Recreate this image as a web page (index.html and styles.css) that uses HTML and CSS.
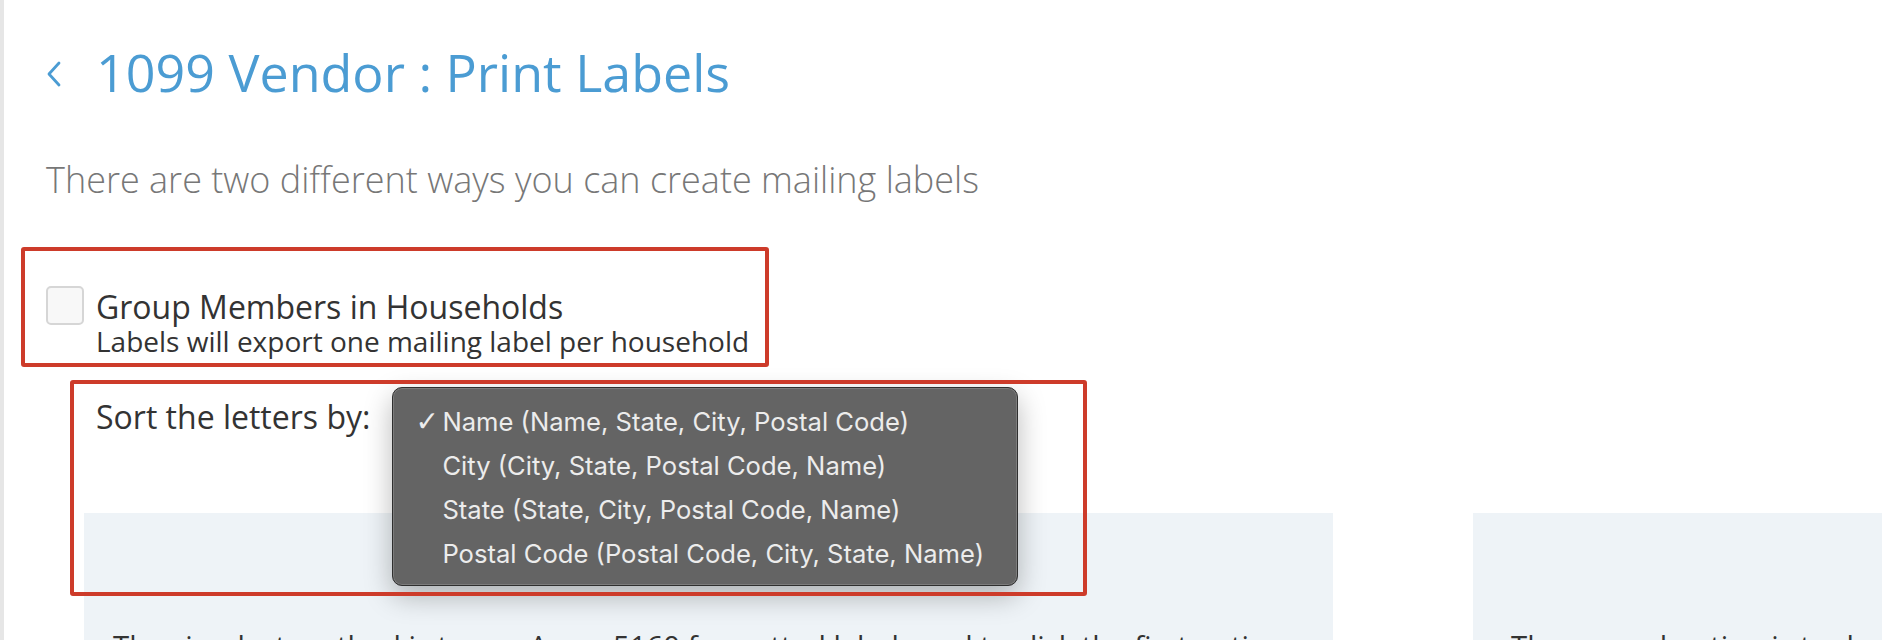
FILE: index.html
```html
<!DOCTYPE html>
<html lang="en">
<head>
<meta charset="utf-8">
<title>1099 Vendor : Print Labels</title>
<link rel="stylesheet" href="styles.css">
</head>
<body>
<div class="page">
  <header class="page-header">
    <a class="back" href="#" aria-label="Back">
      <svg width="16" height="26" viewBox="0 0 16 26"><polyline points="13,2 3,13 13,24" fill="none" stroke="#4b9cd3" stroke-width="2.8" stroke-linecap="round" stroke-linejoin="round"/></svg>
    </a>
    <h1 class="title">1099 Vendor : Print Labels</h1>
  </header>

  <p class="intro">There are two different ways you can create mailing labels</p>

  <div class="household-box">
    <label class="check-row">
      <span class="checkbox"></span>
      <span class="check-text">
        <span class="check-title">Group Members in Households</span>
        <span class="check-sub">Labels will export one mailing label per household</span>
      </span>
    </label>
  </div>

  <section class="sort-section">
    <div class="sort-row">
      <span class="sort-label">Sort the letters by:</span>
      <div class="select-anchor">
        <ul class="menu">
          <li class="menu-item"><span class="tick">✓</span><span>Name (Name, State, City, Postal Code)</span></li>
          <li class="menu-item"><span class="tick"></span><span>City (City, State, Postal Code, Name)</span></li>
          <li class="menu-item"><span class="tick"></span><span>State (State, City, Postal Code, Name)</span></li>
          <li class="menu-item"><span class="tick"></span><span>Postal Code (Postal Code, City, State, Name)</span></li>
        </ul>
      </div>
    </div>

    <div class="panels">
      <div class="panel panel-first">
        <p class="panel-text">The simplest method is to use Avery 5160 formatted labels and to click the first option below to print your labels directly.</p>
      </div>
      <div class="panel panel-second">
        <p class="panel-text">The second option is to download a file of addresses and merge it into your own label template.</p>
      </div>
    </div>

    <div class="annotation"></div>
  </section>
</div>
</body>
</html>
```

FILE: styles.css
```css
html, body {
  margin: 0;
  padding: 0;
  overflow: hidden;
  height: 640px;
  background: #ffffff;
}

body {
  font-family: "Open Sans", "Liberation Sans", sans-serif;
  color: #333333;
  border-left: 4px solid #e6e6e6;
  box-sizing: border-box;
}

.page {
  padding: 46px 0 0 42px;
}

.page-header {
  display: flex;
  align-items: center;
  gap: 34px;
  height: 52px;
}

.back {
  display: flex;
  width: 16px;
  height: 26px;
  margin-top: 4px;
}

.title {
  margin: 0;
  font-size: 52px;
  line-height: 52px;
  font-weight: 400;
  color: #4b9cd3;
  white-space: nowrap;
}

.intro {
  margin: 64px 0 0 0;
  font-size: 36px;
  line-height: 36px;
  font-weight: 300;
  color: #777777;
  white-space: nowrap;
}

.household-box {
  margin: 49px 0 0 -25px;
  width: 748px;
  height: 120px;
  box-sizing: border-box;
  border: 4px solid #cd3b2a;
  border-radius: 3px;
  padding: 38px 0 0 21px;
}

.check-row {
  display: flex;
  align-items: flex-start;
  gap: 12px;
}

.checkbox {
  flex: none;
  width: 38px;
  height: 39px;
  box-sizing: border-box;
  margin-top: -3px;
  background: #f8f8f8;
  border: 2px solid #d6d6d6;
  border-radius: 5px;
}

.check-text {
  display: flex;
  flex-direction: column;
  white-space: nowrap;
}

.check-title {
  font-size: 32px;
  line-height: 36px;
  color: #333333;
}

.check-sub {
  font-size: 28px;
  line-height: 33px;
  color: #333333;
}

.sort-section {
  position: relative;
  padding-top: 34px;
}

.sort-row {
  display: flex;
  align-items: flex-start;
  gap: 22px;
  margin-left: 50px;
}

.sort-label {
  font-size: 32px;
  line-height: 32px;
  white-space: nowrap;
}

.select-anchor {
  position: relative;
  width: 626px;
  height: 32px;
}

.menu {
  position: absolute;
  z-index: 3;
  top: -14px;
  left: 0;
  width: 626px;
  box-sizing: border-box;
  margin: 0;
  padding: 12px 0 9px 0;
  list-style: none;
  background: #646464;
  border: 1px solid #2f2f2f;
  border-radius: 10px;
  box-shadow: inset 0 0 0 1px rgba(255, 255, 255, 0.16), 0 10px 28px rgba(0, 0, 0, 0.28);
  font-family: "Inter", "Roboto", sans-serif;
  font-size: 25.6px;
  color: #ececec;
}

.menu-item {
  display: flex;
  align-items: center;
  height: 44px;
  line-height: 44px;
  padding-left: 22px;
  white-space: nowrap;
}

.tick {
  width: 27px;
  flex: none;
  font-family: "DejaVu Sans", sans-serif;
  font-size: 28px;
  font-weight: 700;
}

.panels {
  display: flex;
  gap: 140px;
  margin: 80px 0 0 38px;
}

.panel {
  flex: none;
  width: 1249px;
  height: 300px;
  box-sizing: border-box;
  background: #eef3f7;
  padding: 116px 30px 0 29px;
}

.panel-second {
  padding-left: 38px;
}

.panel-text {
  margin: 0;
  font-size: 29.3px;
  line-height: 34px;
  color: #333333;
}

.annotation {
  position: absolute;
  z-index: 4;
  top: 13px;
  left: 24px;
  width: 1017px;
  height: 216px;
  box-sizing: border-box;
  border: 4px solid #cd3b2a;
  border-radius: 3px;
  pointer-events: none;
}
```
